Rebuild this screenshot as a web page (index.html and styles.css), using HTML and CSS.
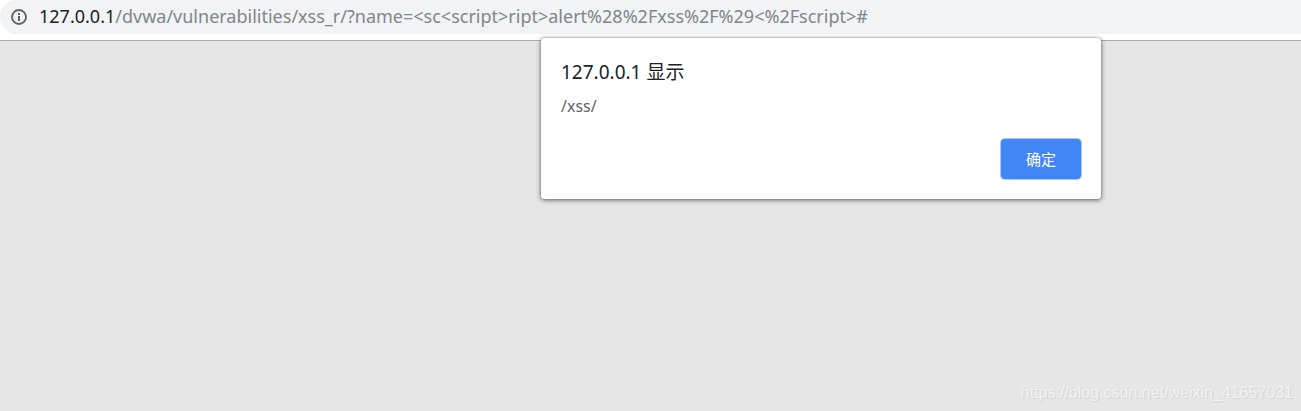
FILE: index.html
```html
<!DOCTYPE html>
<html lang="zh-CN">
<head>
    <meta charset="UTF-8">
    <meta name="viewport" content="width=device-width, initial-scale=1.0">
    <title>127.0.0.1</title>
    <link rel="stylesheet" href="styles.css">
</head>
<body>
    <header class="toolbar">
        <form class="address-bar">
            <svg class="info-icon" viewBox="0 0 16 16" aria-hidden="true">
                <circle cx="8" cy="8" r="7" fill="none" stroke="#5f6368" stroke-width="1.9"/>
                <rect x="7" y="4" width="2" height="2" fill="#5f6368"/>
                <rect x="7" y="7" width="2" height="5" fill="#5f6368"/>
            </svg>
            <label class="host" for="url">127.0.0.1</label>
            <input class="url" type="text" id="url" spellcheck="false" value="/dvwa/vulnerabilities/xss_r/?name=&lt;sc&lt;script&gt;ript&gt;alert%28%2Fxss%2F%29&lt;%2Fscript&gt;#">
        </form>
    </header>

    <main class="page">
        <p class="watermark">https://blog.csdn.net/weixin_41657031</p>
    </main>

    <div class="dialog" role="alertdialog" aria-labelledby="dialogTitle" aria-describedby="dialogText">
        <h1 id="dialogTitle">127.0.0.1 显示</h1>
        <p id="dialogText">/xss/</p>
        <div class="actions">
            <button type="button">确定</button>
        </div>
    </div>
</body>
</html>
```

FILE: styles.css
```css
* {
    box-sizing: border-box;
}

body {
    margin: 0;
    min-height: 100vh;
    display: flex;
    flex-direction: column;
    background-color: #e6e6e6;
    font-family: 'Noto Sans', 'Noto Sans CJK SC', sans-serif;
}

.toolbar {
    background-color: #fff;
    border-bottom: 1px solid #adadad;
    padding-bottom: 6px;
}

.address-bar {
    display: flex;
    align-items: center;
    height: 34px;
    padding-left: 11px;
    background-color: #f1f3f4;
    border-radius: 17px 0 0 17px;
    font-size: 18px;
    line-height: 24px;
}

.info-icon {
    width: 16px;
    height: 16px;
    margin-right: 12px;
}

.host,
.url {
    height: 26px;
    padding: 0 0 2px;
}

.host {
    color: #202124;
}

.url {
    flex: 1;
    min-width: 0;
    border: none;
    outline: none;
    background: none;
    font: inherit;
    color: #80868b;
}

.page {
    flex: 1;
    display: flex;
    align-items: flex-end;
    justify-content: flex-end;
    padding: 8px;
}

.watermark {
    margin: 0;
    font-family: 'Liberation Sans', Arial, sans-serif;
    font-size: 16px;
    line-height: 20px;
    color: #f2f2f2;
    text-shadow: 1px 1px 1px #d0d0d0;
}

.dialog {
    position: absolute;
    top: 38px;
    right: 200px;
    width: 560px;
    max-width: 90%;
    padding: 20px;
    background-color: #fff;
    border-radius: 3px;
    box-shadow: 0 0 1px rgba(0, 0, 0, 0.5), 0 1px 5px rgba(0, 0, 0, 0.6);
}

.dialog h1 {
    margin: 0 0 8px;
    font-size: 19px;
    font-weight: normal;
    line-height: 28px;
    color: #202124;
}

.dialog p {
    margin: 0;
    font-size: 16px;
    line-height: 24px;
    color: #5f6368;
}

.actions {
    display: flex;
    justify-content: flex-end;
    margin-top: 21px;
}

.actions button {
    width: 80px;
    height: 40px;
    padding: 0 0 2px;
    border: none;
    border-radius: 4px;
    background-color: #4285f4;
    box-shadow: 0 0 0 1px #a9c8fa;
    color: #fff;
    font: inherit;
    font-size: 15px;
    cursor: pointer;
}
```
